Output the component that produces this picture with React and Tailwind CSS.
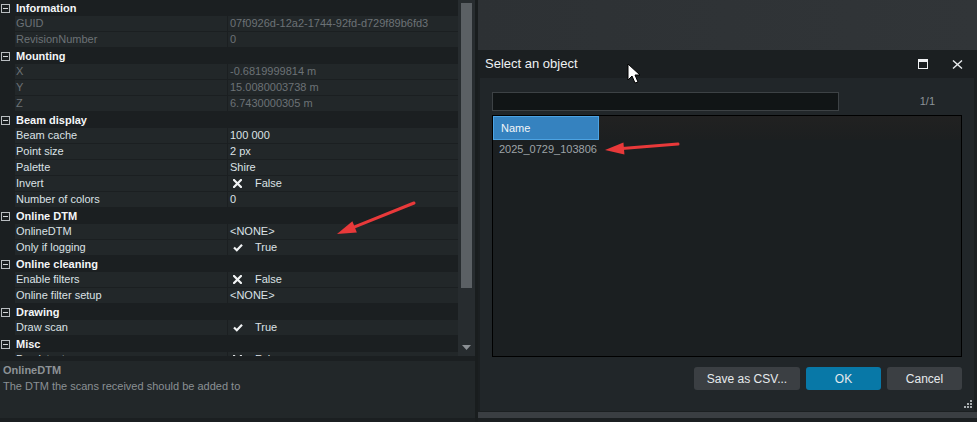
import React from 'react';

const font = { fontFamily: '"Liberation Sans", Arial, sans-serif' };

const sections = [
  {
    title: 'Information',
    rows: [
      { name: 'GUID', value: '07f0926d-12a2-1744-92fd-d729f89b6fd3', ro: true },
      { name: 'RevisionNumber', value: '0', ro: true },
    ],
  },
  {
    title: 'Mounting',
    rows: [
      { name: 'X', value: '-0.6819999814 m', ro: true },
      { name: 'Y', value: '15.0080003738 m', ro: true },
      { name: 'Z', value: '6.7430000305 m', ro: true },
    ],
  },
  {
    title: 'Beam display',
    rows: [
      { name: 'Beam cache', value: '100 000' },
      { name: 'Point size', value: '2 px' },
      { name: 'Palette', value: 'Shire' },
      { name: 'Invert', check: false },
      { name: 'Number of colors', value: '0' },
    ],
  },
  {
    title: 'Online DTM',
    rows: [
      { name: 'OnlineDTM', value: '<NONE>' },
      { name: 'Only if logging', check: true },
    ],
  },
  {
    title: 'Online cleaning',
    rows: [
      { name: 'Enable filters', check: false },
      { name: 'Online filter setup', value: '<NONE>' },
    ],
  },
  {
    title: 'Drawing',
    rows: [{ name: 'Draw scan', check: true }],
  },
  {
    title: 'Misc',
    rows: [{ name: 'Persistent', check: false }],
  },
];

const CrossIcon = () => (
  <svg width="9" height="9" viewBox="0 0 9 9">
    <path d="M1 1 L8 8 M8 1 L1 8" stroke="#f2f4f5" strokeWidth="2.2" strokeLinecap="square" />
  </svg>
);

const CheckIcon = () => (
  <svg width="10" height="9" viewBox="0 0 10 9">
    <path d="M1 4.5 L3.8 7.2 L9 1.8" stroke="#f2f4f5" strokeWidth="2.2" fill="none" />
  </svg>
);

const CategoryRow = ({ title }) => (
  <div className="flex h-[16px] items-center bg-[#1b1f21]">
    <div className="ml-[1px] mr-[6px] flex h-[9px] w-[9px] items-center justify-center border border-[#b9bdc0]">
      <div className="h-[1px] w-[5px] bg-[#d5d8da]" />
    </div>
    <span className="text-[11px] font-bold leading-none text-[#f4f6f8]">{title}</span>
  </div>
);

const PropRow = ({ row }) => {
  const color = row.ro ? 'text-[#6c7276]' : 'text-[#dce2e6]';
  return (
    <div className="flex h-[16px] bg-[#1b1f21]">
      <div className="w-[15px]" />
      <div className={`flex h-[15px] w-[212px] items-center bg-[#222729] pl-[1px] text-[11px] ${color}`}>
        {row.name}
      </div>
      <div className="w-[1px]" />
      <div className={`flex h-[15px] flex-1 items-center bg-[#222729] pl-[2px] text-[11px] ${color}`}>
        {row.check === undefined ? (
          row.value
        ) : (
          <>
            <span className="ml-[3px] flex w-[22px]">{row.check ? <CheckIcon /> : <CrossIcon />}</span>
            <span>{row.check ? 'True' : 'False'}</span>
          </>
        )}
      </div>
    </div>
  );
};

const Arrow = ({ x1, y1, x2, y2 }) => {
  const dx = x2 - x1;
  const dy = y2 - y1;
  const len = Math.hypot(dx, dy);
  const ux = dx / len;
  const uy = dy / len;
  const px = -uy;
  const py = ux;
  const bx = x2 - ux * 19;
  const by = y2 - uy * 19;
  const head = `${x2},${y2} ${bx + px * 6},${by + py * 6} ${bx - px * 6},${by - py * 6}`;
  return (
    <g>
      <line x1={x1} y1={y1} x2={bx + ux * 2} y2={by + uy * 2} stroke="#e8393a" strokeWidth="3" strokeLinecap="round" />
      <polygon points={head} fill="#e8393a" />
    </g>
  );
};

const Button = ({ children, primary, w }) => (
  <button
    className={`flex h-[23px] items-center justify-center rounded-[3px] text-[12px] text-[#e6eaed] ${w} ${
      primary ? 'bg-[#0878a7]' : 'bg-[#3b3f43]'
    }`}
  >
    {children}
  </button>
);

export default function App() {
  return (
    <div className="relative flex h-[422px] w-[977px] overflow-hidden bg-[#1b1f21]" style={font}>
      {/* left: property grid */}
      <div className="flex w-[475px] flex-col">
        <div className="flex h-[356px]">
          <div className="h-full w-[458px] overflow-hidden">
            {sections.map((s) => (
              <div key={s.title}>
                <CategoryRow title={s.title} />
                {s.rows.map((r) => (
                  <PropRow key={r.name} row={r} />
                ))}
              </div>
            ))}
          </div>
          <div className="flex w-[17px] flex-col items-center bg-[#272c2f] pt-[3px]">
            <div className="h-[285px] w-[11px] bg-[#5b6064]" />
            <div className="flex-1" />
            <svg width="9" height="5" viewBox="0 0 9 5" className="mb-[6px]">
              <polygon points="0,0 9,0 4.5,5" fill="#8b9094" />
            </svg>
          </div>
        </div>
        <div className="h-[5px]" />
        <div className="h-[57px] bg-[#222729] px-[3px] pt-[2px] text-[11px] text-[#8a9094]">
          <div className="font-bold leading-[14px] text-[#8d9296]">OnlineDTM</div>
          <div className="mt-[2px] leading-[14px]">The DTM the scans received should be added to</div>
        </div>
      </div>

      <div className="w-[3px] bg-[#191d1e]" />

      {/* right: dialog */}
      <div className="flex flex-1 flex-col">
        <div className="h-[50px] bg-gradient-to-r from-[#2d3134] to-[#313538]" />
        <div className="flex h-[28px] items-center bg-[#1b1f21] pl-[7px] pr-[14px]">
          <span className="text-[13px] text-[#eef1f3]">Select an object</span>
          <div className="flex-1" />
          <svg width="10" height="10" viewBox="0 0 10 10" className="mr-[24px]">
            <rect x="0.5" y="0.5" width="9" height="9" fill="none" stroke="#f0f2f4" strokeWidth="1" />
            <rect x="0" y="0" width="10" height="3" fill="#f0f2f4" />
          </svg>
          <svg width="11" height="9" viewBox="0 0 11 9">
            <path d="M1 0.5 L10 8.5 M10 0.5 L1 8.5" stroke="#e9ecee" strokeWidth="1.4" />
          </svg>
        </div>
        <div className="ml-[2px] mr-[3px] flex h-[333px] flex-col bg-[#212629] px-[12px] pt-[14px]">
          <div className="flex h-[19px] items-center">
            <div className="h-[19px] w-[347px] border border-[#3d4245] bg-[#111516]" />
            <div className="flex-1" />
            <span className="mr-[27px] text-[11px] text-[#8c9398]">1/1</span>
          </div>
          <div className="mt-[4px] flex h-[242px] w-[470px] flex-col border border-black bg-[#1b1f21]">
            <div className="flex h-[24px] bg-gradient-to-b from-[#212121] to-[#1c1f20]">
              <div className="flex w-[106px] items-center border border-[#4ca3e3] bg-[#3582bf] pl-[7px] text-[11px] text-[#f2f5f7]">
                Name
              </div>
            </div>
            <div className="pl-[6px] pt-[1px] text-[11px] text-[#9ea4a8]">2025_0729_103806</div>
          </div>
          <div className="mt-[10px] flex justify-end gap-[6px]">
            <Button w="w-[106px]">Save as CSV...</Button>
            <Button w="w-[75px]" primary>
              OK
            </Button>
            <Button w="w-[75px]">Cancel</Button>
          </div>
          <div className="flex flex-1 items-end justify-end pb-[3px]">
            <svg width="8" height="8" viewBox="0 0 8 8" className="-mr-[10px]">
              <rect x="6" y="0" width="2" height="2" fill="#a9aeb1" />
              <rect x="3" y="3" width="2" height="2" fill="#a9aeb1" />
              <rect x="6" y="3" width="2" height="2" fill="#a9aeb1" />
              <rect x="0" y="6" width="2" height="2" fill="#a9aeb1" />
              <rect x="3" y="6" width="2" height="2" fill="#a9aeb1" />
              <rect x="6" y="6" width="2" height="2" fill="#a9aeb1" />
            </svg>
          </div>
        </div>
        <div className="mt-[1px] h-[6px] bg-[#3a3e42]" />
      </div>

      {/* annotations */}
      <svg className="pointer-events-none absolute left-0 top-0" width="977" height="422">
        <Arrow x1={414} y1={203} x2={337} y2={234} />
        <Arrow x1={678} y1={144} x2={605} y2={150} />
        <polygon
          points="628,64 628,80 632,76 635,83 638,82 635,75 640,75"
          fill="#ffffff"
          stroke="#000000"
          strokeWidth="1"
          strokeLinejoin="round"
        />
      </svg>
    </div>
  );
}
